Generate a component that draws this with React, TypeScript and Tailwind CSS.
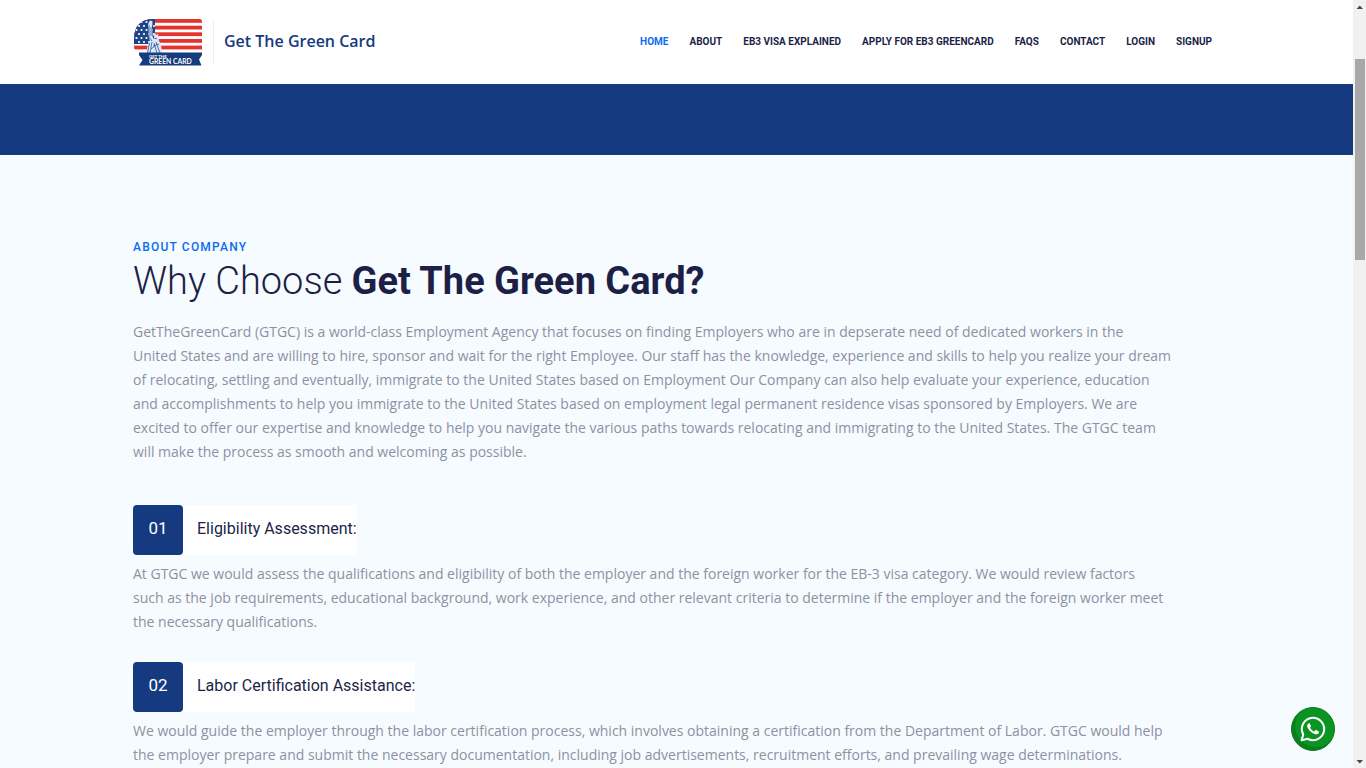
const navLinks = [
  "HOME",
  "ABOUT",
  "EB3 VISA EXPLAINED",
  "APPLY FOR EB3 GREENCARD",
  "FAQS",
  "CONTACT",
  "LOGIN",
  "SIGNUP",
];

const introLines = [
  "GetTheGreenCard (GTGC) is a world-class Employment Agency that focuses on finding Employers who are in depserate need of dedicated workers in the",
  "United States and are willing to hire, sponsor and wait for the right Employee. Our staff has the knowledge, experience and skills to help you realize your dream",
  "of relocating, settling and eventually, immigrate to the United States based on Employment Our Company can also help evaluate your experience, education",
  "and accomplishments to help you immigrate to the United States based on employment legal permanent residence visas sponsored by Employers. We are",
  "excited to offer our expertise and knowledge to help you navigate the various paths towards relocating and immigrating to the United States. The GTGC team",
  "will make the process as smooth and welcoming as possible.",
];

const steps = [
  {
    number: "01",
    title: "Eligibility Assessment:",
    lines: [
      "At GTGC we would assess the qualifications and eligibility of both the employer and the foreign worker for the EB-3 visa category. We would review factors",
      "such as the job requirements, educational background, work experience, and other relevant criteria to determine if the employer and the foreign worker meet",
      "the necessary qualifications.",
    ],
  },
  {
    number: "02",
    title: "Labor Certification Assistance:",
    lines: [
      "We would guide the employer through the labor certification process, which involves obtaining a certification from the Department of Labor. GTGC would help",
      "the employer prepare and submit the necessary documentation, including job advertisements, recruitment efforts, and prevailing wage determinations.",
    ],
  },
];

function Logo() {
  const stars = [];
  for (let row = 0; row < 6; row++) {
    for (let col = 0; col < 4; col++) {
      stars.push(
        <circle key={`${row}-${col}`} cx={2.5 + col * 5 + (row % 2) * 2.5} cy={3 + row * 4} r="1.1" fill="#fff" />
      );
    }
  }

  return (
    <svg viewBox="0 -1 68 48" className="h-12 w-[68px]" aria-hidden="true">
      <defs>
        <clipPath id="flag">
          <path d="M20 0H65.5Q68 0 68 2.5V35H5Q0 33 0 27V20Q0 0 20 0Z" />
        </clipPath>
      </defs>
      <g clipPath="url(#flag)">
        <rect width="68" height="36" fill="#fff" />
        {[0, 6.7, 13.3, 20, 26.6].map((y) => (
          <rect key={y} y={y} width="68" height="3.8" fill="#e5322d" />
        ))}
        <rect width="21" height="25" fill="#1d4489" />
        {stars}
      </g>
      {/* statue */}
      <path d="M14.2 5L15.5 2L17.3 1.5L18.6 5L18 7L18.6 18L20 20L20 17L18.5 15.5L20.8 16.2L21 14L22.3 16L24.6 14.5L24 17L26.5 17L24.8 19L25 22L27 25L28 34H12.5L13.5 26L16 22L14.8 18Z" fill="#d7e8f8" />
      <path d="M15 6V18L18 22M17 8V17M15.5 24L13.5 34M18 23L16 34M20 24L23 34M22 23L26 34M20 19L23 20M19 27L25 25M17 30L21 27" fill="none" stroke="#2c5794" strokeWidth="0.8" />
      <path d="M5 33.5H68V36L65 40.5L67.5 46.5H5L8.5 41L5 36Z" fill="#173c7d" />
      <text x="15" y="38.8" fontSize="4.4" fontWeight="700" fill="#fff" fontFamily="Lato, sans-serif">GET THE</text>
      <text x="15" y="45.2" fontSize="6.8" fontWeight="700" fill="#fff" fontFamily="Lato, sans-serif">GREEN CARD</text>
    </svg>
  );
}

function Header() {
  return (
    <header className="h-[84px] shrink-0 bg-white">
      <div className="mx-auto flex h-full max-w-[1087px] items-center justify-between">
        <a href="#home" className="flex items-center pl-px">
          <Logo />
          <span className="ml-[11px] flex h-[43px] items-center border-l border-[#ececf0] pb-0.5 pl-2.5 font-['Open_Sans',sans-serif] text-base font-semibold text-[#153a7f]">
            Get The Green Card
          </span>
        </a>
        <nav className="mr-2 flex gap-[21px] pb-0.5 text-[10px] font-bold whitespace-nowrap">
          {navLinks.map((label, i) => (
            <a key={label} href="#" className={i === 0 ? "text-[#0a6cf0]" : "text-[#1d1f47]"}>
              {label}
            </a>
          ))}
        </nav>
      </div>
    </header>
  );
}

function Lines({ lines }: { lines: string[] }) {
  return (
    <p className="font-['Open_Sans',sans-serif] text-sm leading-6 whitespace-nowrap text-[#8e90a3]">
      {lines.map((line) => (
        <span key={line} className="block">
          {line}
        </span>
      ))}
    </p>
  );
}

function Scrollbar() {
  return (
    <div className="flex w-[13px] shrink-0 flex-col items-center bg-[#f1f1f1]" aria-hidden="true">
      <svg viewBox="0 0 13 14" className="h-3.5 w-[13px]">
        <path d="M3.5 9H10L6.8 5.5Z" fill="#45455a" />
      </svg>
      <div className="mt-[45px] h-[201px] w-2.5 bg-[#a8a8a8]" />
      <svg viewBox="0 0 13 14" className="mt-auto h-3.5 w-[13px]">
        <path d="M3.5 6H10L6.8 9.5Z" fill="#45455a" />
      </svg>
    </div>
  );
}

export default function App() {
  return (
    <div className="flex h-screen overflow-hidden bg-[#f6fbff] font-['Roboto',sans-serif]">
      <div className="flex min-w-0 flex-1 flex-col overflow-hidden">
        <Header />
        <div className="h-[71px] shrink-0 bg-[#153a7f]" />
        <main className="mx-auto w-full max-w-[1087px] pt-[82px]">
          <h3 className="text-xs leading-5 font-medium tracking-widest text-[#0a6cf0]">ABOUT COMPANY</h3>
          <h2 className="text-[38px] leading-[48px] font-light text-[#1d1f47]">
            Why Choose <b className="font-bold">Get The Green Card?</b>
          </h2>
          <div className="mt-[15px]">
            <Lines lines={introLines} />
          </div>
          <div className="mt-[41px] flex flex-col gap-7">
            {steps.map((step) => (
              <section key={step.number}>
                <div className="mb-[7px] flex w-fit items-center bg-white">
                  <span className="flex size-[50px] items-center justify-center rounded bg-[#153a7f] pb-0.5 text-[17px] text-white">
                    {step.number}
                  </span>
                  <h4 className="ml-3.5 pb-0.5 text-base text-[#1d1f47]">{step.title}</h4>
                </div>
                <Lines lines={step.lines} />
              </section>
            ))}
          </div>
        </main>
      </div>
      <Scrollbar />
      <a
        href="#whatsapp"
        aria-label="WhatsApp"
        className="fixed right-[31px] bottom-[17px] flex size-11 items-center justify-center rounded-full border border-[#0b7a1c] bg-[#0a9422] shadow-[inset_3px_-3px_0_#0b7d1d]"
      >
        <svg viewBox="0 0 24 24" className="size-[26px]" fill="none" stroke="#fff" strokeWidth="1.9">
          <path d="M1.5 22.5L3 17A10.3 10.3 0 1 1 7 21Z" strokeLinejoin="round" />
          <path
            d="M8.6 6.8C8.2 6.7 7.6 6.8 7.2 7.3C6.3 8.3 6.5 9.8 7.2 11C8.6 13.5 10.5 15.5 13.6 16.6C15 17.2 16.8 16.8 17.4 15.4C17.7 14.5 17.5 14.3 17 14L15 13C14.6 12.9 14.4 13 14.1 13.4L13.3 14.3C11.6 13.7 10.2 12.4 9.3 10.8L10 9.9C10.2 9.5 10.1 9.3 10 9L9.2 7.2C9 6.9 8.9 6.8 8.6 6.8Z"
            fill="#fff"
            stroke="none"
          />
        </svg>
      </a>
    </div>
  );
}
